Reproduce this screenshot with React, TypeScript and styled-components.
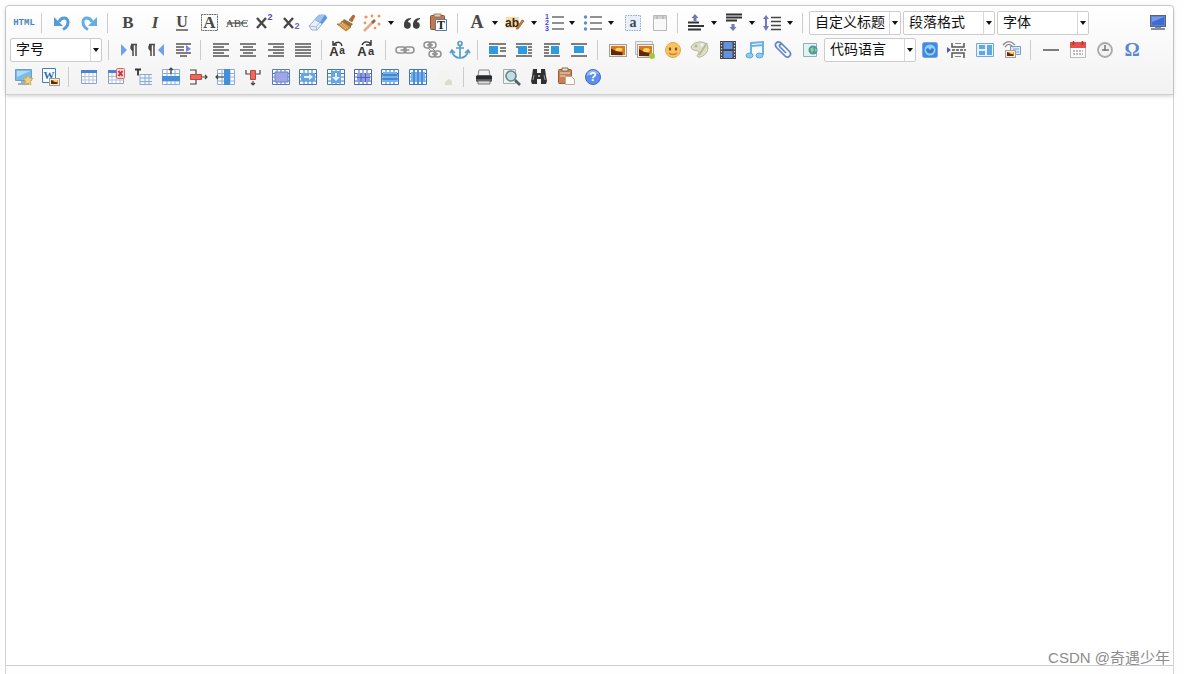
import React from "react";
import styled, { createGlobalStyle } from "styled-components";

const GlobalStyle = createGlobalStyle`
  * { box-sizing: border-box; }
  body {
    margin: 0;
    background: #fefefe;
    font-family: "Noto Sans CJK SC", "Liberation Sans", sans-serif;
  }
`;

const Page = styled.div`
  display: flex;
  flex-direction: column;
  min-height: 100vh;
  padding: 5px 10px 0 5px;
`;

const Editor = styled.main`
  position: relative;
  flex: 1;
  display: flex;
  flex-direction: column;
  border: 1px solid #d4d4d4;
  border-bottom: 0;
  border-radius: 4px 4px 0 0;
  background: #fff;
`;

const Toolbar = styled.div`
  padding: 3px 1px 4px 4px;
  border-bottom: 1px solid #cfcfcf;
  border-radius: 4px 4px 0 0;
  background: linear-gradient(#fff, #f2f2f2);
  box-shadow: 0 1px 4px rgba(0, 0, 0, 0.2);
`;

const Row = styled.div`
  display: flex;
  align-items: center;
  height: 27px;
`;

const Group = styled.div<{ $width: number }>`
  display: flex;
  flex: none;
  width: ${(p) => p.$width}px;
`;

const Separator = styled.span<{ $tight?: boolean }>`
  flex: none;
  width: 1px;
  height: 20px;
  margin: 0 ${(p) => (p.$tight ? 0 : 6)}px 0 4px;
  background: #ccc;
`;

const ToolButton = styled.button<{ $split?: boolean; $faded?: boolean }>`
  display: flex;
  flex: 1 1 ${(p) => (p.$split ? 39 : 27)}px;
  align-items: center;
  justify-content: ${(p) => (p.$split ? "space-between" : "center")};
  min-width: 0;
  height: 24px;
  padding: ${(p) => (p.$split ? "0 5px 0 3px" : "0")};
  border: 0;
  background: none;
  opacity: ${(p) => (p.$faded ? 0.4 : 1)};
`;

const Glyph = styled.svg`
  flex: none;
  display: block;
  width: 20px;
  height: 20px;
  overflow: visible;
`;

const Arrow = styled.span`
  width: 0;
  height: 0;
  border: 3px solid transparent;
  border-top: 4px solid #111;
  border-bottom: 0;
`;

const ComboBox = styled.label<{ $gap?: number }>`
  position: relative;
  flex: none;
  width: 92px;
  height: 24px;
  margin-right: ${(p) => p.$gap ?? 0}px;
`;

const Select = styled.select`
  display: block;
  width: 100%;
  height: 100%;
  padding: 0 12px 4px 5px;
  border: 1px solid #ccc;
  border-radius: 2px;
  background: #fff;
  color: #111;
  font: 14px/18px "Noto Sans CJK SC", sans-serif;
  appearance: none;
`;

const ComboArrow = styled.span`
  position: absolute;
  top: 1px;
  right: 1px;
  bottom: 1px;
  display: flex;
  align-items: center;
  justify-content: center;
  width: 11px;
  border-left: 1px solid #d8d8d8;
  pointer-events: none;
`;

const Spacer = styled.span`
  flex: 1;
`;

const Content = styled.div`
  flex: 1;
  outline: none;
`;

const StatusBar = styled.footer`
  height: 9px;
  border-top: 1px solid #ccc;
  background: #fefefe;
`;

const Watermark = styled.span`
  position: absolute;
  right: 3px;
  bottom: 4px;
  color: #8c8c8c;
  font: 15px/24px "Liberation Sans", "Noto Sans CJK SC", sans-serif;
  white-space: nowrap;
`;

const INK = "#484848";
const BLUE = "#3b78c8";
const SKY = "#6fb4ee";
const SERIF = "Liberation Serif, serif";
const SANS = "Liberation Sans, sans-serif";

type LetterProps = {
  x?: number;
  y?: number;
  size: number;
  fill?: string;
  family?: string;
  weight?: number;
  italic?: boolean;
  children: string;
};

const Letter = ({ x = 10, y = 15, size, fill = INK, family = SERIF, weight = 700, italic, children }: LetterProps) => (
  <text x={x} y={y} fontSize={size} fill={fill} fontFamily={family} fontWeight={weight} fontStyle={italic ? "italic" : "normal"} textAnchor="middle">
    {children}
  </text>
);

const Lines = ({ d, color = "#555", width = 1.4 }: { d: string; color?: string; width?: number }) => (
  <path d={d} stroke={color} strokeWidth={width} fill="none" />
);

const Cells = ({ color = "#4a83c6", fill = "#fff" }: { color?: string; fill?: string }) => (
  <g>
    <rect x="1" y="3" width="18" height="14" fill={fill} />
    <path d="M1.5 2.5h17v15h-17zM1.5 6.5h17M1.5 10h17M1.5 14h17M6 2.5v15M10 2.5v15M14 2.5v15" stroke={color} fill="none" strokeWidth="1" />
  </g>
);

const SmallTable = () => (
  <g>
    <path d="M2.5 3.5h15v13h-15z" fill="#fff" stroke="#8ba3ca" />
    <path d="M6 6v10M10 6v10M14 6v10M3 9.5h14M3 13h14" stroke="#b4c2dc" fill="none" />
    <path d="M2 3h16v3H2z" fill="#4c82d2" />
  </g>
);

const Photo = ({ x = 1, y = 4, w = 18, h = 13 }: { x?: number; y?: number; w?: number; h?: number }) => (
  <g>
    <rect x={x + 0.5} y={y + 0.5} width={w - 1} height={h - 1} fill="#f4f1ea" stroke="#a69e90" />
    <rect x={x + 2} y={y + 2} width={w - 4} height={h - 4} fill="#d9781c" />
    <ellipse cx={x + w / 2 + 1} cy={y + h / 2 - 1} rx={w / 5} ry={h / 7} fill="#ffd35a" />
    <path d={`M${x + 2} ${y + h - 2}v${-h / 2}l${w / 4} ${h / 5} ${w / 2 - 2} ${h / 9}v${h / 5}z`} fill="#5b2a10" />
  </g>
);

const Chain = ({ x, y, w = 18 }: { x: number; y: number; w?: number }) => (
  <g transform={`translate(${x} ${y})`} fill="none" stroke="#929292" strokeWidth="1.5">
    <rect x="0" y="0" width={w / 2 + 1} height="6" rx="3" />
    <rect x={w / 2 - 1} y="0" width={w / 2 + 1} height="6" rx="3" />
    <path d={`M${w / 4} 3h${w / 2}`} />
  </g>
);

const Pilcrow = ({ x }: { x: number }) => (
  <g transform={`translate(${x} 0)`}>
    <path d="M4 4.5h6M6 5v11M9 5v11" stroke={INK} strokeWidth="1.5" />
    <path d="M6 4a3.6 3.6 0 0 0 0 7z" fill={INK} />
  </g>
);

const Numbers = ({ dots }: { dots?: boolean }) => (
  <g>
    <Lines d="M7 4h12M7 10h12M7 16h12" color="#6c6c6c" width={1.3} />
    {dots ? (
      <g fill="#5b8ed0">
        <circle cx="2.500" cy="4" r="1.7" />
        <circle cx="2.500" cy="10" r="1.7" />
        <circle cx="2.500" cy="16" r="1.7" />
      </g>
    ) : (
      <g>
        <Letter x={2} y={6} size={7} fill="#4141d8" family={SANS}>1</Letter>
        <Letter x={2} y={12} size={7} fill="#4141d8" family={SANS}>2</Letter>
        <Letter x={2} y={18} size={7} fill="#4141d8" family={SANS}>3</Letter>
      </g>
    )}
  </g>
);

const TurnArrow = ({ color }: { color: string }) => (
  <g>
    <path d="M7 9C9 4 16 3.500 16 9c0 4-2 6-5 7.500" fill="none" stroke={color} strokeWidth="3" />
    <path d="M2 4v9h9z" fill={color} />
  </g>
);

const icons: Record<string, React.ReactNode> = {
  html: <Letter y={12} size={9} fill="#4a86b8" family="Liberation Mono, monospace">HTML</Letter>,
  undo: <TurnArrow color="#559bd8" />,
  redo: (
    <g transform="matrix(-1 0 0 1 20 0)">
      <TurnArrow color="#64aee2" />
    </g>
  ),
  bold: <Letter size={17}>B</Letter>,
  italic: <Letter size={17} italic>I</Letter>,
  underline: (
    <g>
      <Letter y={14} size={16}>U</Letter>
      <Lines d="M4 17h12" color={INK} />
    </g>
  ),
  boxed: (
    <g>
      <rect x="2.5" y="1.5" width="16" height="16" fill="none" stroke="#777" strokeDasharray="2 0.5" />
      <Letter x={10.5} size={17}>A</Letter>
    </g>
  ),
  strike: (
    <g>
      <Letter y={14} size={11} weight={400}>ABC</Letter>
      <Lines d="M0 10h20" color={INK} width={1.2} />
    </g>
  ),
  sup: (
    <g>
      <Lines d="M3 5l9 10M12 5L3 15" color={INK} width={2.4} />
      <Letter x={16} y={7} size={9} fill="#4b4bbb" family={SANS}>2</Letter>
    </g>
  ),
  sub: (
    <g>
      <Lines d="M3 5l9 10M12 5L3 15" color={INK} width={2.4} />
      <Letter x={16} y={16} size={9} fill="#6666bb" family={SANS}>2</Letter>
    </g>
  ),
  eraser: (
    <g strokeLinejoin="round">
      <path d="M1 13L11 2h6l2 3-10 12H4z" fill="#e8effa" stroke="#8eb0df" />
      <path d="M7 7l4-5h6l2 3-5 6z" fill="#5b96df" />
      <path d="M7 7l4-5h6L12 9z" fill="#9cc3f2" />
      <path d="M2 13l6 1 6-7M8 14l1 3" stroke="#9baccc" fill="none" strokeWidth="0.8" />
    </g>
  ),
  brush: (
    <g>
      <path d="M13 7l4-5 2 1-3 6z" fill="#bd6b27" stroke="#925020" strokeWidth="0.6" />
      <path d="M8 6l9 5-3 3-8-5z" fill="#897448" />
      <path d="M6 8l9 6-5 4-9-7 3 0z" fill="#d49040" stroke="#9a5e22" strokeWidth="0.7" />
      <path d="M4 11l6 5M6 10l6 5" stroke="#f0bd70" />
    </g>
  ),
  wand: (
    <g>
      <Lines d="M2 18L12 8" color="#e4ad8e" width={2.6} />
      <Lines d="M10 10l3-3" color="#a85c3c" width={2.6} />
      <g fill="#e99663">
        <circle cx="4" cy="4" r="1.6" /><circle cx="10" cy="3" r="1.4" /><circle cx="17" cy="3" r="1.5" />
        <circle cx="3" cy="10" r="1.4" /><circle cx="17" cy="11" r="1.5" /><circle cx="13" cy="15" r="1.3" />
      </g>
    </g>
  ),
  quote: (
    <g fill="#3f3f3f">
      <path d="M9 5C4 5 2 8 2 12a3.4 3.4 0 1 0 4-3c0-1 1-2 3-3z" />
      <path d="M18 5c-5 0-7 3-7 7a3.4 3.4 0 1 0 4-3c0-1 1-2 3-3z" />
    </g>
  ),
  pastePlain: (
    <g>
      <rect x="1.5" y="2.5" width="14" height="14" rx="1" fill="#c47a4a" stroke="#8f4e2b" />
      <path d="M5 1h7v3H5z" fill="#dfcdb8" stroke="#8a6545" strokeWidth="0.8" />
      <path d="M6.500 6.500h11v11h-11z" fill="#fff" stroke="#567aae" />
      <Letter x={12} y={16} size={12} fill="#222">T</Letter>
    </g>
  ),
  fontColor: <Letter size={18}>A</Letter>,
  highlight: (
    <g>
      <path d="M0 4h13v11H0z" fill="#ffd9a0" />
      <Letter x={6} y={14} size={12} fill="#33281c" family={SANS}>ab</Letter>
      <path d="M10 16l6-9 2 1-6 8z" fill="#c57b39" stroke="#805020" strokeWidth="0.6" />
    </g>
  ),
  ordered: <Numbers />,
  unordered: <Numbers dots />,
  selectAll: (
    <g>
      <rect x="2.500" y="2.500" width="15" height="15" fill="#e8f0fb" stroke="#8fabd6" strokeDasharray="1.500 1" />
      <Letter y={14} size={14} fill="#3e4658">a</Letter>
    </g>
  ),
  clearDoc: (
    <g>
      <path d="M3.500 2.500h13v15h-13z" fill="#f8f8f8" stroke="#b9b9b9" />
      <path d="M4 3h12v3H4z" fill="#d2d2d2" />
      <path d="M7 3v3M13 3v3" stroke="#aaa" />
    </g>
  ),
  spaceBefore: (
    <g>
      <Lines d="M1 9.500h11M1 13h16M1 16.500h13" color="#333" width={1.8} />
      <path d="M4.500 5L8 1l3.500 4h-2v3h-3V5z" fill="#7079b5" />
    </g>
  ),
  spaceAfter: (
    <g>
      <Lines d="M1 1.500h16M1 4.500h16M1 7.500h11" color="#333" width={1.8} />
      <path d="M4.500 14L8 18l3.500-4h-2v-3h-3v3z" fill="#7079b5" />
    </g>
  ),
  lineHeight: (
    <g>
      <Lines d="M8 4.500h10M8 8.500h10M8 12.500h10M8 16.500h10" color="#444" />
      <path d="M0 6l3-4 3 4H4v7h2l-3 5-3-5h2V6z" fill="#7079c0" />
    </g>
  ),
  fullscreen: (
    <g>
      <rect x="2.500" y="2.500" width="15" height="11" fill="#5b86dc" stroke="#5c6370" />
      <path d="M4 4h12v8H4z" fill="#3d6cd2" />
      <path d="M4 4h12L4 9z" fill="#739be8" />
      <path d="M7 14h6v1H7zM3 15h14v2H3z" fill="#858e9c" />
    </g>
  ),
  ltr: (
    <g>
      <path d="M2 4l6 6-6 6z" fill="#6fa2ec" />
      <Pilcrow x={8} />
    </g>
  ),
  rtl: (
    <g>
      <Pilcrow x={-1} />
      <path d="M18 4l-6 6 6 6z" fill="#6fa2ec" />
    </g>
  ),
  indent: (
    <g>
      <Lines d="M3 4h15M3 7h8M3 10h8M3 13h15M7 16h7" color="#555" />
      <path d="M13 5l5 4-5 3z" fill="#7b82dc" />
    </g>
  ),
  alignLeft: <Lines d="M2 4h16M2 7h11M2 10h16M2 13h11M2 16h16" />,
  alignCenter: <Lines d="M2 4h16M5 7h10M2 10h16M5 13h10M2 16h16" />,
  alignRight: <Lines d="M2 4h16M7 7h11M2 10h16M7 13h11M2 16h16" />,
  justify: <Lines d="M2 4h16M2 7h16M2 10h16M2 13h16M2 16h16" />,
  upper: (
    <g>
      <Letter x={7} y={16} size={13} family={SANS} fill="#333">A</Letter>
      <Letter x={15} y={14} size={10} family={SANS} fill="#333">a</Letter>
      <Lines d="M7 4c4-3 7-2 8 2M6 1v4h4" color="#333" />
    </g>
  ),
  lower: (
    <g>
      <Letter x={6} y={16} size={13} family={SANS} fill="#333">A</Letter>
      <Letter x={15} y={15} size={11} family={SANS} fill="#333">a</Letter>
      <Lines d="M6 5c2-4 6-4 9-1M15 0v5h-5" color="#333" />
    </g>
  ),
  link: <Chain x={0} y={7} />,
  unlink: (
    <g>
      <Chain x={1} y={2} w={12} />
      <Chain x={6} y={11} w={12} />
      <Lines d="M5 8l4 4M9 8l4 4" color="#999" width={1} />
    </g>
  ),
  anchor: (
    <g fill="none" stroke="#5a9cca" strokeWidth="1.700">
      <circle cx="10" cy="3.500" r="2" />
      <path d="M10 6v12M6 8h8M2 11c0 4 4 7 8 7s8-3 8-7M0 13l2-3 3 3M15 13l3-3 2 3" />
    </g>
  ),
  imgLeft: (
    <g>
      <Lines d="M1 4h17M12 8h6M12 11h6M1 16h17" color="#555" />
      <path d="M1 6h9v8H1z" fill="#2c9be0" />
    </g>
  ),
  imgInline: (
    <g>
      <Lines d="M1 4h16M1 7h2M13 7h4M13 10h4M13 13h4M1 16h16" color="#555" />
      <path d="M3 6h9v8H3z" fill="#2c9be0" />
    </g>
  ),
  imgRight: (
    <g>
      <Lines d="M2 4h16M2 7h5M2 10h5M2 13h5M2 16h16" color="#555" />
      <path d="M9 6h8v8H9z" fill="#2c9be0" />
    </g>
  ),
  imgCenter: (
    <g>
      <Lines d="M2 4h16M2 16h16" color="#555" />
      <path d="M5 6h10v7H5z" fill="#2c9be0" />
    </g>
  ),
  image: <Photo />,
  images: (
    <g>
      <path d="M.5 1.500h17v13H.5z" fill="#eee" stroke="#bbb" />
      <Photo x={2} y={4} w={17} h={14} />
      <circle cx="17" cy="16" r="3" fill="#9ecb3c" />
    </g>
  ),
  emoji: (
    <g>
      <circle cx="10" cy="10" r="7.500" fill="#fbc360" stroke="#e9a64a" />
      <ellipse cx="7" cy="9" rx="1.200" ry="1.800" fill="#80502a" />
      <ellipse cx="13" cy="9" rx="1.200" ry="1.800" fill="#80502a" />
      <path d="M6 13c2 2 6 2 8 0" fill="none" stroke="#c48336" strokeWidth="1.400" />
    </g>
  ),
  scrawl: (
    <g>
      <path d="M1 7C4 0 18 0 18 8c0 6-7 10-10 9-3-2 3-4 0-6-3-1-6 0-7-4z" fill="#dfddc9" stroke="#b6b59d" />
      <circle cx="6" cy="6" r="1.500" fill="#9cc48b" />
      <circle cx="12" cy="5" r="1.500" fill="#f2f2ee" />
      <path d="M17 3L9 15" stroke="#b2be98" strokeWidth="2" />
    </g>
  ),
  video: (
    <g>
      <path d="M2 1h16v18H2z" fill="#46464c" />
      <path d="M5.500 2h9v7h-9zM5.500 11h9v7h-9z" fill="#6690e0" />
      <path d="M3.500 2v16M16.500 2v16" stroke="#c8c8c8" strokeWidth="1.300" strokeDasharray="1.500 1.500" />
    </g>
  ),
  music: (
    <g>
      <path d="M6 14V3l12-1v13M7 6l11-1" fill="none" stroke="#69b4e2" strokeWidth="2" />
      <ellipse cx="4.500" cy="15.500" rx="3.500" ry="2.500" fill="#8bcaf0" stroke="#5ea8d8" />
      <ellipse cx="14.500" cy="15.500" rx="3.500" ry="2.500" fill="#8bcaf0" stroke="#5ea8d8" />
    </g>
  ),
  attach: (
    <path d="M13 13L7 7c-2-2 1-4 3-2l6 6c4 4-1 8-4 5L4 8C0 4 5 0 8 3l7 7" fill="none" stroke="#5f84cc" strokeWidth="1.700" />
  ),
  map: (
    <g>
      <path d="M3.500 3.500h13v13h-13z" fill="#e5f2f2" stroke="#8eb2b8" />
      <circle cx="13" cy="10" r="4.500" fill="#4c97a8" />
      <path d="M10 9l3-2 1 3-2 3zM15 8l2 2-2 2z" fill="#91ce89" />
    </g>
  ),
  app: (
    <g>
      <rect x="2.500" y="2.500" width="15" height="15" rx="2" fill="#4687df" stroke="#72a7e6" />
      <circle cx="10" cy="10" r="5.500" fill="#8bd3fb" />
      <path d="M6 9l2-1 2 2 2-2 2 1c0 6-8 6-8 0z" fill="#3d77d0" />
    </g>
  ),
  pageBreak: (
    <g>
      <path d="M5 3v4h12V3M5 18v-5h12v5" fill="none" stroke="#555" strokeWidth="1.500" />
      <path d="M8 3.500h6M8 16.500h6" stroke="#888" />
      <path d="M5 10h14" stroke="#555" strokeWidth="1.500" strokeDasharray="3 1" />
      <path d="M0 7l4 3-4 3z" fill="#5656b5" />
    </g>
  ),
  template: (
    <g>
      <path d="M1.500 3.500h17v13h-17z" fill="#e5f2ff" stroke="#77a8dc" />
      <path d="M4 5h6v4H4zM4 11h6v4H4zM12 5h5v10h-5z" fill="#61a6e8" />
    </g>
  ),
  background: (
    <g>
      <path d="M8.500 6.500h10v8h-10z" fill="#dce9ff" stroke="#799bdc" />
      <path d="M11 9h6M11 12h6" stroke="#7f99d4" />
      <path d="M1 5c4-5 8-4 12 0M3 7c3-4 5-3 8 0" fill="none" stroke="#8b8b8b" strokeWidth="1.300" />
      <Photo x={3} y={10} w={11} h={8} />
    </g>
  ),
  rule: <Lines d="M2 10h16" color="#555" width={1.5} />,
  date: (
    <g>
      <path d="M2.500 3.500h15v14h-15z" fill="#fafafa" stroke="#bcbcbc" />
      <path d="M2 2h16v6H2z" fill="#e4504b" />
      <path d="M5.500 1v4M14.500 1v4" stroke="#a33" strokeWidth="1.500" />
      <path d="M5 11h10M5 14h10" stroke="#a8a8a8" strokeWidth="1.500" strokeDasharray="2 1" />
    </g>
  ),
  time: (
    <g>
      <circle cx="10" cy="10" r="7" fill="#f2f2f2" stroke="#aaa" strokeWidth="1.800" />
      <path d="M10 5v6M7 10h7" stroke="#777" strokeWidth="1.500" />
    </g>
  ),
  special: <Letter y={16} size={19} fill="#5887d4">Ω</Letter>,
  snap: (
    <g>
      <path d="M1.500 2.500h16v11h-16z" fill="#77bceb" stroke="#6d9dc8" />
      <path d="M3 4h13L3 10z" fill="#b0dcf7" />
      <path d="M7 14h5v2h3v2H4v-2h3z" fill="#9bb0bf" />
      <path d="M14 8l1.500 3 3.500.5-2.500 2.500.5 4-3-2-3 2 .5-4L9 11.500l3.500-.5z" fill="#f4cf7b" stroke="#d3a03b" strokeWidth="0.700" />
    </g>
  ),
  word: (
    <g>
      <path d="M1.500 1.500h13v14h-13z" fill="#fff" stroke="#447dbb" />
      <Letter x={8} y={12} size={11} fill="#2771b5">W</Letter>
      <Photo x={8} y={11} w={11} h={8} />
    </g>
  ),
  table: <SmallTable />,
  tableDelete: (
    <g>
      <SmallTable />
      <rect x="10.500" y="1.500" width="8" height="10" rx="1" fill="#f3dada" stroke="#d46b6b" />
      <path d="M12.500 4l4 5M16.500 4l-4 5" stroke="#cf2e35" strokeWidth="2" />
    </g>
  ),
  tableBefore: (
    <g>
      <Lines d="M1 2.500h6M4 2.500v6" color="#333" width={1.8} />
      <path d="M6 7.500h12M6 11h12M6 14.500h12M6 17.500h12M6 7v11M11 7v11M15 7v11" stroke="#88a8da" />
    </g>
  ),
  insertRow: (
    <g>
      <Cells color="#8babdb" />
      <path d="M1 9h18v5H1z" fill="#438fdc" />
      <Lines d="M10 7V1M8 3l2-2 2 2" color="#444" width={1.2} />
    </g>
  ),
  deleteRow: (
    <g>
      <Lines d="M2 3h6v4M2 17h6v-4M14 10h5M17 8l2 2-2 2" color="#444" width={1.2} />
      <path d="M2.500 7.500h11v5h-11z" fill="#eb6a5d" stroke="#b84842" />
    </g>
  ),
  insertCol: (
    <g>
      <Cells color="#8babdb" />
      <path d="M8 2h6v16H8z" fill="#438fdc" />
      <Lines d="M8 10H0M2 8l-2 2 2 2" color="#444" width={1.2} />
    </g>
  ),
  deleteCol: (
    <g>
      <Lines d="M3 3v4h5M17 3v4h-5M10 14v4M8 16l2 2 2-2" color="#444" width={1.2} />
      <path d="M7.500 3.500h5v9h-5z" fill="#eb6a5d" stroke="#b84842" />
    </g>
  ),
  mergeCells: (
    <g>
      <Cells color="#517cc0" />
      <path d="M4 5h13v10H4z" fill="#9ca6e8" stroke="#757fc6" />
    </g>
  ),
  mergeRight: (
    <g>
      <Cells color="#3f79b8" />
      <path d="M3 6h14v8H3z" fill="#62a8e7" />
      <path d="M6 9h5V7l4 3-4 3v-2H6z" fill="#e9f4ff" />
    </g>
  ),
  mergeDown: (
    <g>
      <Cells color="#3f79b8" />
      <path d="M5 4h10v12H5z" fill="#62a8e7" />
      <path d="M9 6h2v4h3l-4 4-4-4h3z" fill="#e9f4ff" />
    </g>
  ),
  splitCells: (
    <g>
      <Cells color="#476aae" />
      <path d="M4 6h13v9H4z" fill="#8f99e5" />
      <path d="M8 6v9M12.500 6v9M4 10.500h13" stroke="#4766bb" />
    </g>
  ),
  splitRows: (
    <g>
      <Cells color={BLUE} />
      <path d="M3 5h14v10H3z" fill={SKY} />
      <path d="M2 8h16M2 12h16" stroke={BLUE} strokeWidth="1.300" />
    </g>
  ),
  splitCols: (
    <g>
      <Cells color={BLUE} />
      <path d="M3 5h14v10H3z" fill={SKY} />
      <path d="M6 3v14M10 3v14M14 3v14" stroke={BLUE} strokeWidth="1.300" />
    </g>
  ),
  chart: (
    <g>
      <path d="M3 3h12v14H3z" fill="#f2f2e8" />
      <path d="M10 18h7v-4l-3-2-4 3z" fill="#b9b79c" />
    </g>
  ),
  print: (
    <g>
      <path d="M5 3h10l1 6H4z" fill="#f1f1f1" stroke="#888" />
      <rect x="2" y="8" width="16" height="7" rx="1.500" fill="#55585b" />
      <path d="M2 9h16v3H2z" fill="#27292b" />
      <path d="M4 14h12v3H4z" fill="#ddd" stroke="#777" />
    </g>
  ),
  preview: (
    <g>
      <path d="M2.500 2.500h12v14h-12z" fill="#eef3f2" stroke="#a3adab" />
      <circle cx="10" cy="9" r="5" fill="#bee0e5" stroke="#6d8287" strokeWidth="1.600" />
      <path d="M14 13l5 5" stroke="#555e63" strokeWidth="2.600" />
    </g>
  ),
  search: (
    <g fill="#303030">
      <path d="M4 2h4v4h4V2h4l1 7 1 5-1 3h-5v-5H8v5H3l-1-3 1-5z" />
      <path d="M5 8l-1 5M15 8l1 5" stroke="#999" />
      <path d="M9 8h2v2H9z" fill="#aaa" />
    </g>
  ),
  drafts: (
    <g>
      <rect x="2.500" y="2.500" width="13" height="14" rx="1" fill="#c58157" stroke="#995c37" />
      <path d="M6 1h6v3H6z" fill="#efe5d9" stroke="#8d6849" />
      <path d="M4 6h10M4 9h5" stroke="#eadbcf" />
      <path d="M9.500 9.500h6l3 3v5h-9z" fill="#fff" stroke="#d3a68f" />
    </g>
  ),
  help: (
    <g>
      <circle cx="10" cy="10" r="7.500" fill="#5d8fe9" stroke="#3f6dcc" />
      <path d="M4 7c2-5 10-5 12 0-4-1-8 0-12 2z" fill="#94b8f6" />
      <Letter y={14} size={12} fill="#fff" family={SANS}>?</Letter>
    </g>
  ),
};

type Tool = { icon: string; label: string; split?: boolean };

const t = (icon: string, label: string, split = false): Tool => ({ icon, label, split });

const source = [t("html", "源代码")];
const history = [t("undo", "撤销"), t("redo", "重做")];
const textStyle = [
  t("bold", "加粗"), t("italic", "斜体"), t("underline", "下划线"), t("boxed", "字符边框"), t("strike", "删除线"),
  t("sup", "上标"), t("sub", "下标"), t("eraser", "清除格式"), t("brush", "格式刷"), t("wand", "自动排版", true),
  t("quote", "引用"), t("pastePlain", "纯文本粘贴"),
];
const colors = [
  t("fontColor", "字体颜色", true), t("highlight", "背景色", true), t("ordered", "有序列表", true),
  t("unordered", "无序列表", true), t("selectAll", "全选"), t("clearDoc", "清空文档"),
];
const spacing = [t("spaceBefore", "段前距", true), t("spaceAfter", "段后距", true), t("lineHeight", "行间距", true)];
const direction = [t("ltr", "从左向右输入"), t("rtl", "从右向左输入"), t("indent", "首行缩进")];
const alignment = [t("alignLeft", "居左对齐"), t("alignCenter", "居中对齐"), t("alignRight", "居右对齐"), t("justify", "两端对齐")];
const letterCase = [t("upper", "字母大写"), t("lower", "字母小写")];
const links = [t("link", "超链接"), t("unlink", "取消链接"), t("anchor", "锚点")];
const floats = [t("imgLeft", "左浮动"), t("imgInline", "默认"), t("imgRight", "右浮动"), t("imgCenter", "居中")];
const media = [
  t("image", "单图上传"), t("images", "多图上传"), t("emoji", "表情"), t("scrawl", "涂鸦"),
  t("video", "视频"), t("music", "音乐"), t("attach", "附件"), t("map", "地图"),
];
const blocks = [t("app", "插入框架"), t("pageBreak", "分页"), t("template", "模板"), t("background", "背景")];
const inserts = [t("rule", "分隔线"), t("date", "日期"), t("time", "时间"), t("special", "特殊字符")];
const capture = [t("snap", "截图"), t("word", "图片转存")];
const tables = [
  t("table", "插入表格"), t("tableDelete", "删除表格"), t("tableBefore", "表格前插入行"), t("insertRow", "前插入行"),
  t("deleteRow", "删除行"), t("insertCol", "前插入列"), t("deleteCol", "删除列"), t("mergeCells", "合并多个单元格"),
  t("mergeRight", "右合并单元格"), t("mergeDown", "下合并单元格"), t("splitCells", "完全拆分单元格"),
  t("splitRows", "拆分成行"), t("splitCols", "拆分成列"), t("chart", "图表"),
];
const utilities = [t("print", "打印"), t("preview", "预览"), t("search", "查询替换"), t("drafts", "从草稿箱加载"), t("help", "帮助")];

const Tools = ({ items, width }: { items: Tool[]; width: number }) => (
  <Group $width={width} role="group">
    {items.map((item) => (
      <ToolButton key={item.icon} type="button" aria-label={item.label} $split={item.split} $faded={item.icon === "chart"}>
        <Glyph viewBox="0 0 20 20" aria-hidden="true">{icons[item.icon]}</Glyph>
        {item.split && <Arrow />}
      </ToolButton>
    ))}
  </Group>
);

const Combo = ({ label, gap }: { label: string; gap?: number }) => (
  <ComboBox $gap={gap}>
    <Select aria-label={label}>
      <option>{label}</option>
    </Select>
    <ComboArrow><Arrow /></ComboArrow>
  </ComboBox>
);

export default function App() {
  return (
    <>
      <GlobalStyle />
      <Page>
        <Editor>
          <Toolbar role="toolbar" aria-label="编辑器工具栏">
            <Row>
              <Tools items={source} width={27} />
              <Separator />
              <Tools items={history} width={55} />
              <Separator />
              <Tools items={textStyle} width={339} />
              <Separator />
              <Tools items={colors} width={209} />
              <Separator />
              <Tools items={spacing} width={114} />
              <Separator />
              <Combo label="自定义标题" gap={2} />
              <Combo label="段落格式" gap={2} />
              <Combo label="字体" />
              <Spacer />
              <Tools items={[t("fullscreen", "全屏")]} width={28} />
            </Row>
            <Row>
              <Combo label="字号" gap={2} />
              <Separator />
              <Tools items={direction} width={81} />
              <Separator />
              <Tools items={alignment} width={110} />
              <Separator $tight />
              <Tools items={letterCase} width={59} />
              <Separator />
              <Tools items={links} width={81} />
              <Separator />
              <Tools items={floats} width={109} />
              <Separator />
              <Tools items={media} width={220} />
              <Combo label="代码语言" />
              <Tools items={blocks} width={110} />
              <Separator />
              <Tools items={inserts} width={109} />
            </Row>
            <Row>
              <Tools items={capture} width={54} />
              <Separator />
              <Tools items={tables} width={384} />
              <Separator />
              <Tools items={utilities} width={137} />
            </Row>
          </Toolbar>
          <Content contentEditable suppressContentEditableWarning role="textbox" aria-label="正文" />
          <StatusBar />
          <Watermark>CSDN @奇遇少年</Watermark>
        </Editor>
      </Page>
    </>
  );
}
